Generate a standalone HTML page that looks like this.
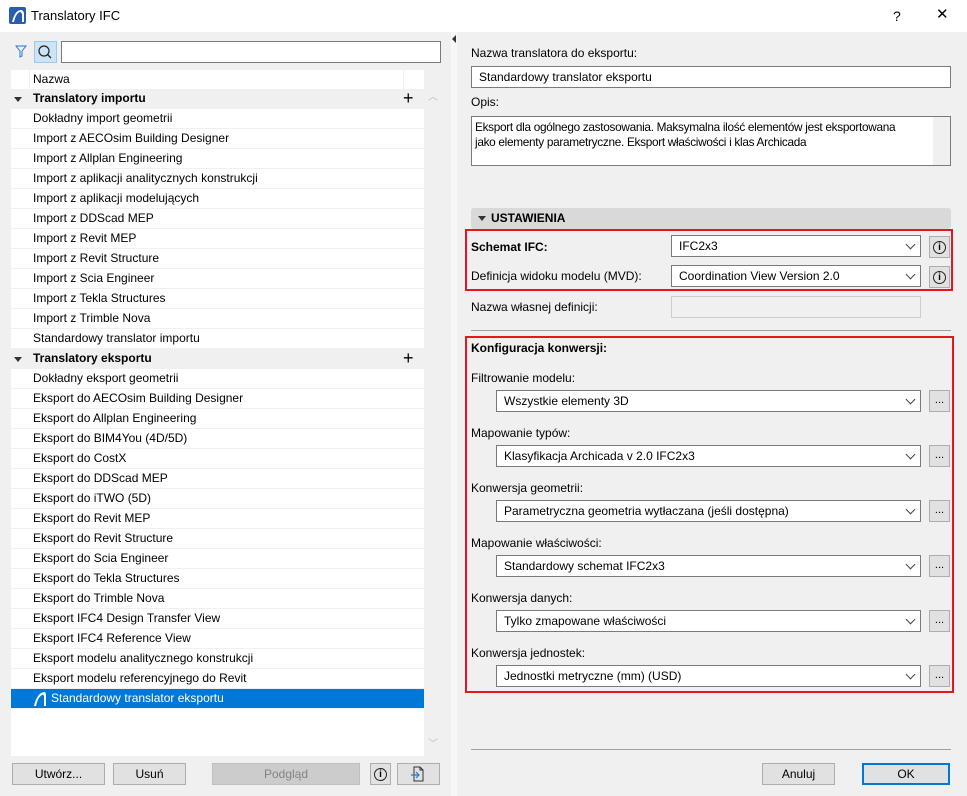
<!DOCTYPE html>
<html><head><meta charset="utf-8"><style>
*{box-sizing:border-box;margin:0;padding:0}
body{width:967px;height:796px;background:#f0f0f0;font-family:"Liberation Sans",sans-serif;font-size:12px;color:#000;position:relative;overflow:hidden}
.a{position:absolute}
.t{position:absolute;white-space:nowrap;line-height:20px}
.row{position:absolute;left:11px;width:413px;height:20px;background:#fff;border-bottom:1px solid #f0f0f0;padding-left:22px;line-height:19px}
.grp{background:#f0f0f0;font-weight:bold}
.inp{position:absolute;background:#fff;border:1px solid #7a7a7a;height:22px;line-height:20px;padding-left:7px}
.sel{position:absolute;background:#fff;border:1px solid #7a7a7a;height:22px;line-height:20px;padding-left:7px}
.sel:after{content:"";position:absolute;right:6px;top:5px;width:6px;height:6px;border-right:1px solid #444;border-bottom:1px solid #444;transform:rotate(45deg)}
.btn{position:absolute;background:#e1e1e1;border:1px solid #adadad;height:22px;line-height:20px;text-align:center}
.ib{position:absolute;width:21px;height:22px;background:#e1e1e1;border:1px solid #adadad}
.ib i{position:absolute;left:3px;top:4px;width:13px;height:13px;border:1px solid #222;border-radius:50%;font-style:normal;font-size:10px;line-height:11px;text-align:center;font-weight:bold}
.dots{position:absolute;width:21px;height:22px;background:#e1e1e1;border:1px solid #adadad;text-align:center;line-height:18px;font-size:11px}
.red{position:absolute;border:2px solid #e8141e}
</style></head><body>
<div class="a" style="left:0;top:0;width:967px;height:32px;background:#fff"></div>
<svg class="a" style="left:9px;top:7px" width="17" height="17"><rect width="17" height="17" rx="2" fill="#2a5cb0"/><path d="M3 15 Q6 3 12 3 Q14 3 15 6 L15 15 L13 15 L13 7 Q12 5 11 5 Q7 6 5 15Z" fill="#fff"/></svg>
<div class="t" style="left:31px;top:6px;font-size:13px">Translatory IFC</div>
<div class="t" style="left:893px;top:6px;font-size:14px">?</div>
<div class="t" style="left:936px;top:5px;font-size:15px">✕</div>

<div class="a" style="left:451px;top:32px;width:6px;height:764px;background:#f7f7f7"></div>
<div class="a" style="left:452px;top:35px;width:0;height:0;border-top:4px solid transparent;border-bottom:4px solid transparent;border-right:4px solid #333"></div>

<svg class="a" style="left:15px;top:45px" width="12" height="13"><path d="M1 1 H11 L7 6 V11 L5 12 V6 Z" fill="none" stroke="#1e78d7"/></svg>
<div class="a" style="left:34px;top:41px;width:23px;height:22px;background:#cce4f7;border:1px solid #99c9ef"></div>
<svg class="a" style="left:37px;top:44px" width="16" height="16"><circle cx="7" cy="7" r="5" fill="none" stroke="#222" stroke-width="1.2"/><path d="M10.5 10.5 L14 14" stroke="#222" stroke-width="1.3"/></svg>
<div class="a" style="left:61px;top:41px;width:380px;height:22px;background:#fff;border:1px solid #7a7a7a"></div>

<div class="a" style="left:11px;top:70px;width:413px;height:686px;background:#fff"></div>
<div class="a" style="left:29px;top:70px;width:1px;height:19px;background:#f0f0f0"></div>
<div class="a" style="left:403px;top:70px;width:1px;height:19px;background:#f0f0f0"></div>
<div class="t" style="left:33px;top:69px">Nazwa</div>
<div class="a" style="left:424px;top:70px;width:16px;height:686px;background:#f0f0f0"></div>
<div class="t" style="left:428px;top:88px;color:#bbb;font-size:10px">︿</div>
<div class="t" style="left:428px;top:735px;color:#bbb;font-size:10px">﹀</div>

<div class="row grp" style="top:89px">Translatory importu</div>
<div class="row" style="top:109px">Dokładny import geometrii</div>
<div class="row" style="top:129px">Import z AECOsim Building Designer</div>
<div class="row" style="top:149px">Import z Allplan Engineering</div>
<div class="row" style="top:169px">Import z aplikacji analitycznych konstrukcji</div>
<div class="row" style="top:189px">Import z aplikacji modelujących</div>
<div class="row" style="top:209px">Import z DDScad MEP</div>
<div class="row" style="top:229px">Import z Revit MEP</div>
<div class="row" style="top:249px">Import z Revit Structure</div>
<div class="row" style="top:269px">Import z Scia Engineer</div>
<div class="row" style="top:289px">Import z Tekla Structures</div>
<div class="row" style="top:309px">Import z Trimble Nova</div>
<div class="row" style="top:329px">Standardowy translator importu</div>
<div class="row grp" style="top:349px">Translatory eksportu</div>
<div class="row" style="top:369px">Dokładny eksport geometrii</div>
<div class="row" style="top:389px">Eksport do AECOsim Building Designer</div>
<div class="row" style="top:409px">Eksport do Allplan Engineering</div>
<div class="row" style="top:429px">Eksport do BIM4You (4D/5D)</div>
<div class="row" style="top:449px">Eksport do CostX</div>
<div class="row" style="top:469px">Eksport do DDScad MEP</div>
<div class="row" style="top:489px">Eksport do iTWO (5D)</div>
<div class="row" style="top:509px">Eksport do Revit MEP</div>
<div class="row" style="top:529px">Eksport do Revit Structure</div>
<div class="row" style="top:549px">Eksport do Scia Engineer</div>
<div class="row" style="top:569px">Eksport do Tekla Structures</div>
<div class="row" style="top:589px">Eksport do Trimble Nova</div>
<div class="row" style="top:609px">Eksport IFC4 Design Transfer View</div>
<div class="row" style="top:629px">Eksport IFC4 Reference View</div>
<div class="row" style="top:649px">Eksport modelu analitycznego konstrukcji</div>
<div class="row" style="top:669px">Eksport modelu referencyjnego do Revit</div>
<div class="row" style="top:689px;background:#0078d7;color:#fff;padding-left:40px">Standardowy translator eksportu</div>
<svg class="a" style="left:33px;top:691px" width="14" height="16"><path d="M1 15 Q4 2 11 1 Q13 1 13 4 L13 15 L11 15 L11 5 Q10 3 9 4 Q5 6 3 15Z" fill="#fff"/></svg>
<div class="a" style="left:14px;top:97px;border-left:4px solid transparent;border-right:4px solid transparent;border-top:5px solid #333"></div>
<div class="a" style="left:14px;top:357px;border-left:4px solid transparent;border-right:4px solid transparent;border-top:5px solid #333"></div>
<div class="t" style="left:403px;top:88px;font-size:18px;font-weight:300">+</div>
<div class="t" style="left:403px;top:348px;font-size:18px;font-weight:300">+</div>

<div class="btn" style="left:12px;top:763px;width:93px">Utwórz...</div>
<div class="btn" style="left:113px;top:763px;width:73px">Usuń</div>
<div class="btn" style="left:212px;top:763px;width:148px;background:#ccc;border-color:#bfbfbf;color:#838383">Podgląd</div>
<div class="ib" style="left:370px;top:763px"><i>i</i></div>
<div class="btn" style="left:397px;top:763px;width:43px"></div>
<svg class="a" style="left:410px;top:766px" width="16" height="16"><path d="M4 1 H10 L13 4 V15 H4 Z M10 1 V4 H13" fill="none" stroke="#333"/><path d="M1 9 H9 M6 6 L9 9 L6 12" fill="none" stroke="#1e78d7" stroke-width="1.2"/></svg>

<div class="t" style="left:471px;top:43px">Nazwa translatora do eksportu:</div>
<div class="inp" style="left:471px;top:66px;width:480px">Standardowy translator eksportu</div>
<div class="t" style="left:471px;top:92px">Opis:</div>
<div class="a" style="left:471px;top:116px;width:480px;height:50px;background:#fff;border:1px solid #7a7a7a;padding:3px 4px 0 3px;line-height:15px;font-size:11.8px;letter-spacing:-0.3px;white-space:nowrap;overflow:hidden">Eksport dla ogólnego zastosowania. Maksymalna ilość elementów jest eksportowana<br>jako elementy parametryczne. Eksport właściwości i klas Archicada</div>
<div class="a" style="left:933px;top:117px;width:17px;height:48px;background:#f0f0f0"></div>

<div class="a" style="left:471px;top:208px;width:480px;height:21px;background:#d9d9d9;border-radius:3px"></div>
<div class="a" style="left:478px;top:216px;border-left:4px solid transparent;border-right:4px solid transparent;border-top:5px solid #333"></div>
<div class="t" style="left:491px;top:208px;font-weight:bold">USTAWIENIA</div>

<div class="red" style="left:465px;top:229px;width:488px;height:62px"></div>
<div class="t" style="left:471px;top:237px;font-weight:bold">Schemat IFC:</div>
<div class="sel" style="left:671px;top:235px;width:250px">IFC2x3</div>
<div class="ib" style="left:929px;top:236px"><i>i</i></div>
<div class="t" style="left:471px;top:266px">Definicja widoku modelu (MVD):</div>
<div class="sel" style="left:671px;top:265px;width:250px">Coordination View Version 2.0</div>
<div class="ib" style="left:929px;top:266px"><i>i</i></div>
<div class="t" style="left:471px;top:297px">Nazwa własnej definicji:</div>
<div class="a" style="left:671px;top:296px;width:250px;height:22px;border:1px solid #ccc;background:#f0f0f0"></div>
<div class="a" style="left:471px;top:330px;width:480px;height:1px;background:#a0a0a0"></div>

<div class="red" style="left:465px;top:336px;width:489px;height:357px"></div>
<div class="t" style="left:471px;top:338px;font-weight:bold">Konfiguracja konwersji:</div>
<div class="t" style="left:471px;top:368px">Filtrowanie modelu:</div>
<div class="sel" style="left:496px;top:390px;width:425px">Wszystkie elementy 3D</div><div class="dots" style="left:929px;top:390px">...</div>
<div class="t" style="left:471px;top:423px">Mapowanie typów:</div>
<div class="sel" style="left:496px;top:445px;width:425px">Klasyfikacja Archicada v 2.0 IFC2x3</div><div class="dots" style="left:929px;top:445px">...</div>
<div class="t" style="left:471px;top:478px">Konwersja geometrii:</div>
<div class="sel" style="left:496px;top:500px;width:425px">Parametryczna geometria wytłaczana (jeśli dostępna)</div><div class="dots" style="left:929px;top:500px">...</div>
<div class="t" style="left:471px;top:533px">Mapowanie właściwości:</div>
<div class="sel" style="left:496px;top:555px;width:425px">Standardowy schemat IFC2x3</div><div class="dots" style="left:929px;top:555px">...</div>
<div class="t" style="left:471px;top:588px">Konwersja danych:</div>
<div class="sel" style="left:496px;top:610px;width:425px">Tylko zmapowane właściwości</div><div class="dots" style="left:929px;top:610px">...</div>
<div class="t" style="left:471px;top:643px">Konwersja jednostek:</div>
<div class="sel" style="left:496px;top:665px;width:425px">Jednostki metryczne (mm) (USD)</div><div class="dots" style="left:929px;top:665px">...</div>

<div class="a" style="left:471px;top:749px;width:480px;height:1px;background:#a0a0a0"></div>
<div class="btn" style="left:762px;top:763px;width:73px">Anuluj</div>
<div class="btn" style="left:862px;top:763px;width:88px;border:2px solid #0078d7;line-height:18px">OK</div>
</body></html>
